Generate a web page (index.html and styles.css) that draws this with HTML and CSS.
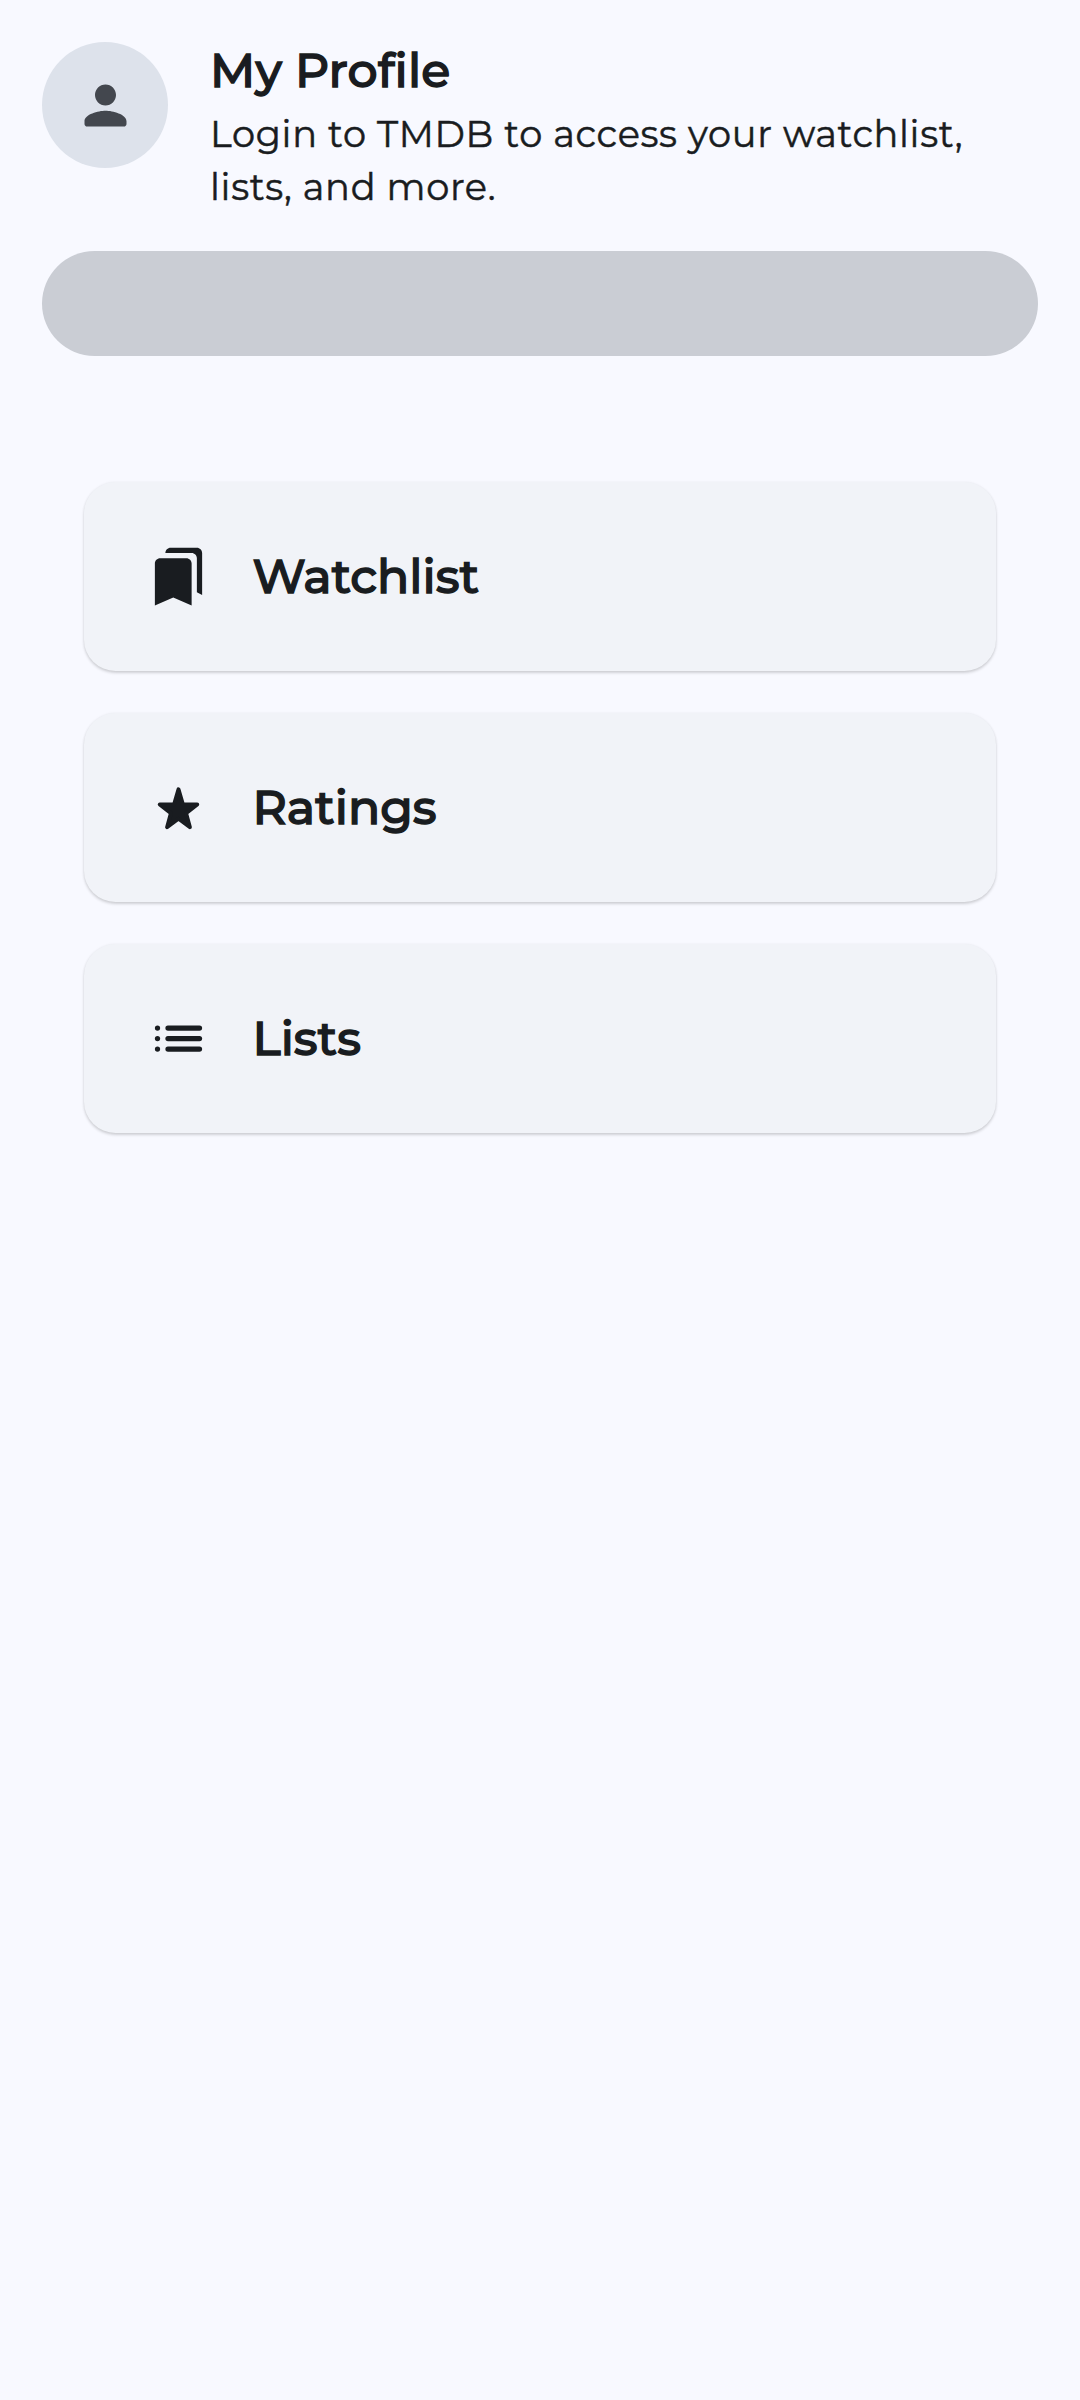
FILE: index.html
```html
<!DOCTYPE html>
<html lang="en">
<head>
<meta charset="utf-8">
<title>My Profile</title>
<link rel="stylesheet" href="styles.css">
</head>
<body>
<main class="screen">
  <header class="profile">
    <div class="avatar">
      <svg class="icon" viewBox="0 0 24 24"><path d="M12 12c2.21 0 4-1.79 4-4s-1.79-4-4-4-4 1.79-4 4 1.79 4 4 4zm0 2c-2.67 0-8 1.34-8 4v1c0 .55.45 1 1 1h14c.55 0 1-.45 1-1v-1c0-2.66-5.33-4-8-4z"/></svg>
    </div>
    <div class="intro">
      <h1 class="heading">My Profile</h1>
      <p class="description">Login to TMDB to access your watchlist,<br>lists, and more.</p>
    </div>
  </header>
  <button class="login" aria-label="Login"></button>
  <nav class="menu">
    <a class="card">
      <svg class="icon" viewBox="0 0 24 24"><path d="M19 18l2 1V3c0-1.1-.9-2-2-2H8.99C7.89 1 7 1.9 7 3h10c1.1 0 2 .9 2 2v13zM15 5H5c-1.1 0-2 .9-2 2v16l7-3 7 3V7c0-1.1-.9-2-2-2z"/></svg>
      <span class="heading">Watchlist</span>
    </a>
    <a class="card">
      <svg class="icon star" viewBox="0 0 24 24"><path d="M12 5.1L13.7 10.85H19.15L14.9 14.2L16.35 19.5L12 16.3L7.65 19.5L9.1 14.2L4.85 10.85H10.3Z"/></svg>
      <span class="heading">Ratings</span>
    </a>
    <a class="card">
      <svg class="icon" viewBox="0 0 24 24"><circle cx="4" cy="8" r="1"/><circle cx="4" cy="12" r="1"/><circle cx="4" cy="16" r="1"/><rect x="7" y="7" width="14" height="2" rx="1"/><rect x="7" y="11" width="14" height="2" rx="1"/><rect x="7" y="15" width="14" height="2" rx="1"/></svg>
      <span class="heading">Lists</span>
    </a>
  </nav>
</main>
</body>
</html>
```
FILE: styles.css
```css
* { box-sizing: border-box; }

body {
  margin: 0;
  background: #f8f9ff;
  color: #191c20;
  font-family: Montserrat, Inter, sans-serif;
}

.screen {
  min-height: 2400px;
  padding: 42px;
}

.profile {
  display: flex;
  gap: 42px;
  height: 209px;
}

.avatar {
  display: flex;
  align-items: center;
  justify-content: center;
  flex: none;
  width: 126px;
  height: 126px;
  border-radius: 50%;
  background: #dde2eb;
  color: #43474e;
}

.icon {
  flex: none;
  width: 63px;
  height: 63px;
  fill: currentColor;
}

.star {
  stroke: currentColor;
  stroke-width: 1.5;
  stroke-linejoin: round;
}

.heading {
  margin: 0;
  padding: 0 0 1px;
  font-size: 47.4px;
  font-weight: 500;
  line-height: 60px;
  white-space: nowrap;
  -webkit-text-stroke: 1.4px currentColor;
}

.intro .heading {
  padding: 0 0 2px;
  line-height: 56px;
  letter-spacing: 0.15px;
}

.description {
  margin: 8px 0 0;
  font-size: 36.75px;
  font-weight: 400;
  letter-spacing: 0.68px;
  line-height: 52.5px;
  white-space: nowrap;
  -webkit-text-stroke: 0.5px currentColor;
}

.login {
  display: block;
  width: 100%;
  height: 105px;
  border: 0;
  border-radius: 53px;
  background: #cacdd4;
}

.menu {
  display: flex;
  flex-direction: column;
  gap: 42px;
  padding: 126px 42px 0;
}

.card {
  display: flex;
  align-items: center;
  gap: 42.5px;
  height: 189px;
  padding: 0 63px;
  border-radius: 31.5px;
  background: #f1f3f8;
  box-shadow: 0 2px 3px rgba(0, 0, 0, 0.16), 0 0 3px rgba(0, 0, 0, 0.05);
}
```
